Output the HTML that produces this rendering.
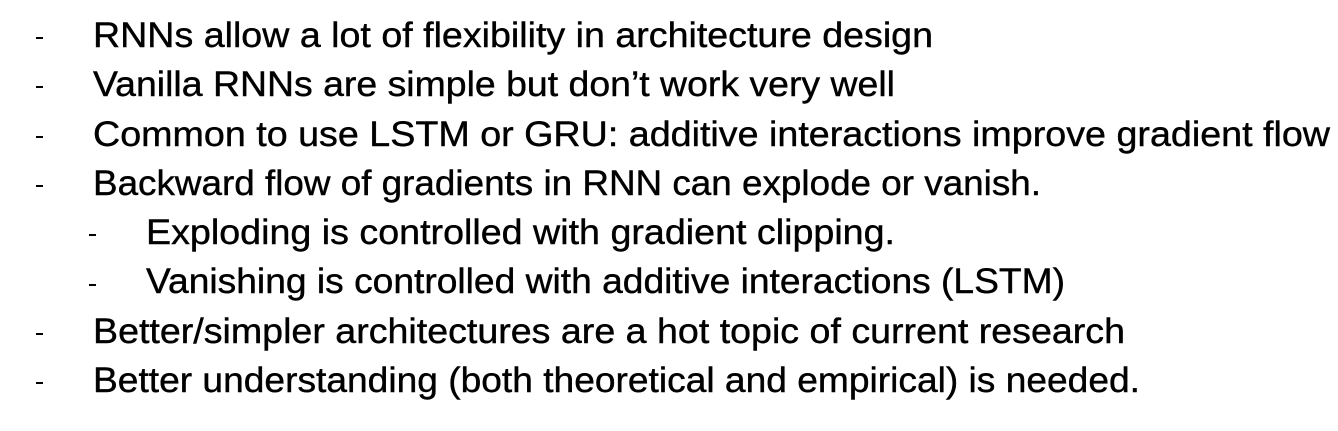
<!DOCTYPE html>
<html><head><meta charset="utf-8"><style>
html,body{margin:0;padding:0;background:#fff;width:1338px;height:431px;overflow:hidden}
svg{display:block}
text{font-family:"Liberation Sans",sans-serif;font-size:35px;fill:#000;stroke:#000;stroke-width:0.4}
</style></head><body>
<svg width="1338" height="431" viewBox="0 0 1338 431">
<g>
<rect x="36" y="37" width="7" height="2"/>
<rect x="36" y="86" width="7" height="2"/>
<rect x="36" y="136" width="7" height="2"/>
<rect x="36" y="185" width="7" height="2"/>
<rect x="89" y="234" width="7" height="2"/>
<rect x="89" y="284" width="7" height="2"/>
<rect x="36" y="333" width="7" height="2"/>
<rect x="36" y="382" width="7" height="2"/>
</g>
<text x="93" y="47" textLength="840" lengthAdjust="spacingAndGlyphs">RNNs allow a lot of flexibility in architecture design</text>
<text x="93" y="96" textLength="802" lengthAdjust="spacingAndGlyphs">Vanilla RNNs are simple but don’t work very well</text>
<text x="93" y="146" textLength="1237" lengthAdjust="spacingAndGlyphs">Common to use LSTM or GRU: additive interactions improve gradient flow</text>
<text x="93" y="195" textLength="948" lengthAdjust="spacingAndGlyphs">Backward flow of gradients in RNN can explode or vanish.</text>
<text x="146" y="244" textLength="749" lengthAdjust="spacingAndGlyphs">Exploding is controlled with gradient clipping.</text>
<text x="146" y="293" textLength="919" lengthAdjust="spacingAndGlyphs">Vanishing is controlled with additive interactions (LSTM)</text>
<text x="93" y="343" textLength="1032" lengthAdjust="spacingAndGlyphs">Better/simpler architectures are a hot topic of current research</text>
<text x="93" y="392" textLength="1047" lengthAdjust="spacingAndGlyphs">Better understanding (both theoretical and empirical) is needed.</text>
</svg>
</body></html>
